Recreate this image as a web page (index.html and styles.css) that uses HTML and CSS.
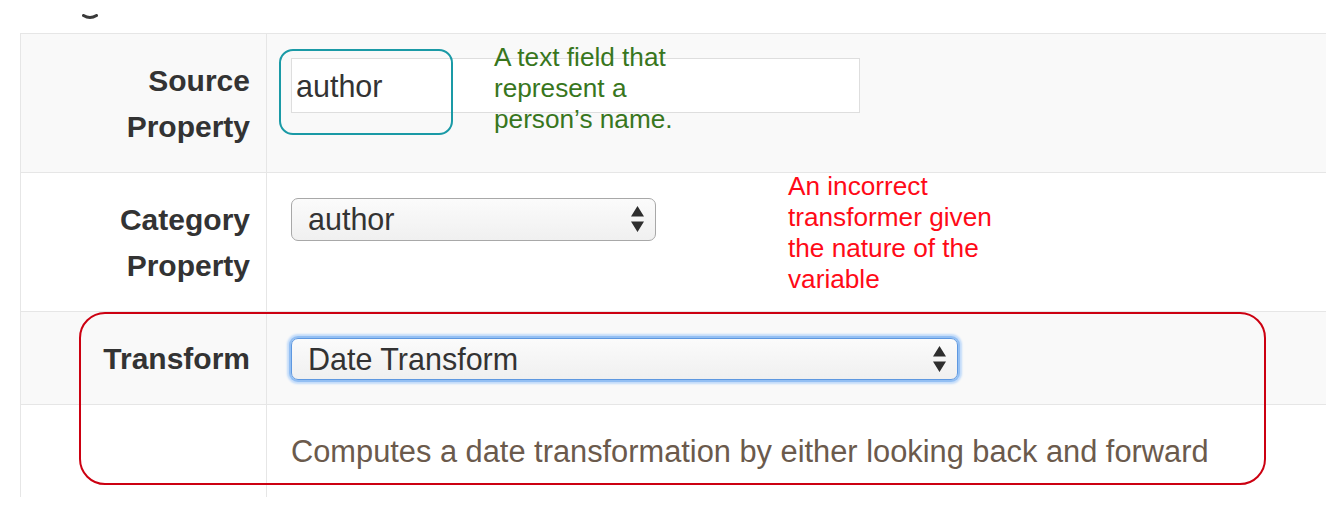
FILE: index.html
```html
<!DOCTYPE html>
<html>
<head>
<meta charset="utf-8">
<link rel="stylesheet" href="styles.css">
</head>
<body>
<div class="page">
  <div class="header">
    <svg class="mark" width="16" height="7" viewBox="0 0 16 7"><path d="M1.5 1.5 Q8 5.5 14.5 1.5" fill="none" stroke="#3a3a3a" stroke-width="3" stroke-linecap="round"/></svg>
  </div>
  <table class="props">
    <tr class="striped">
      <th class="label">Source<br>Property</th>
      <td class="value"><div class="text-input">author</div></td>
    </tr>
    <tr>
      <th class="label">Category<br>Property</th>
      <td class="value">
        <div class="select narrow"><span>author</span>
          <svg class="arrows" width="13" height="27" viewBox="0 0 13 27"><path d="M6.5 0 L13 10.5 L0 10.5 Z M0 15.5 L13 15.5 L6.5 26 Z" fill="#2e2e2e"/></svg>
        </div>
      </td>
    </tr>
    <tr class="striped">
      <th class="label">Transform</th>
      <td class="value">
        <div class="select wide focused"><span>Date Transform</span>
          <svg class="arrows" width="13" height="27" viewBox="0 0 13 27"><path d="M6.5 0 L13 10.5 L0 10.5 Z M0 15.5 L13 15.5 L6.5 26 Z" fill="#2e2e2e"/></svg>
        </div>
      </td>
    </tr>
    <tr class="last">
      <th class="label"></th>
      <td class="value desc">Computes a date transformation by either looking back and forward</td>
    </tr>
  </table>

  <div class="note note-green">A text field that<br>represent a<br>person’s name.</div>
  <div class="note note-red">An incorrect<br>transformer given<br>the nature of the<br>variable</div>
  <div class="ring ring-teal"></div>
  <div class="ring ring-red"></div>
</div>
</body>
</html>
```
FILE: styles.css
```css
html, body {
  margin: 0;
  padding: 0;
  background: #fff;
}
body {
  font-family: "Liberation Sans", Arial, Helvetica, sans-serif;
  color: #333;
}
.page {
  position: relative;
  width: 1344px;
  height: 522px;
  overflow: hidden;
}
.header {
  height: 33px;
  padding-left: 82px;
  padding-top: 14px;
  box-sizing: border-box;
}
.mark {
  display: block;
}
.props {
  margin-left: 20px;
  width: 1306px;
  border-collapse: collapse;
  border-spacing: 0;
}
.props tr {
  border-top: 1px solid #e6e6e6;
}
.props tr.striped {
  background: #f9f9f9;
}
.label {
  width: 229px;
  border-left: 1px solid #e6e6e6;
  border-right: 1px solid #e6e6e6;
  padding: 24px 16px 22px 0;
  text-align: right;
  vertical-align: top;
  font-size: 30px;
  line-height: 46px;
  font-weight: bold;
  color: #333;
}
.value {
  padding: 24px 0 0 24px;
  vertical-align: top;
}
.text-input {
  width: 569px;
  height: 55px;
  box-sizing: border-box;
  border: 1px solid #dedede;
  background: #fff;
  padding-left: 4px;
  font-size: 30.5px;
  line-height: 55px;
  color: #333;
}
.select {
  display: flex;
  align-items: center;
  justify-content: space-between;
  box-sizing: border-box;
  height: 43px;
  margin-top: 1px;
  padding: 0 11px 0 16px;
  border: 1px solid #a8a8a8;
  border-radius: 7px;
  background: linear-gradient(#fbfbfb, #f0f0f0);
  font-size: 30.5px;
  line-height: 41px;
  color: #333;
}
.select.narrow {
  width: 365px;
}
.select.wide {
  width: 667px;
  margin-top: 2px;
  height: 42px;
  border-color: #5e98e0;
  box-shadow: 0 0 0 2px #93bff3, 0 0 2px 4px #c3dcfa;
}
.arrows {
  display: block;
}
.desc {
  padding-bottom: 22px;
  font-size: 30.8px;
  line-height: 46px;
  color: #6b5a4c;
}
.note {
  position: absolute;
  font-size: 26.2px;
  line-height: 31px;
}
.note-green {
  left: 494px;
  top: 42px;
  color: #38761d;
}
.note-red {
  left: 788px;
  top: 171px;
  color: #ff0a17;
}
.ring {
  position: absolute;
  box-sizing: border-box;
}
.ring-teal {
  left: 279px;
  top: 49px;
  width: 174px;
  height: 86px;
  border: 2.5px solid #1a9aa6;
  border-radius: 14px;
}
.ring-red {
  left: 79px;
  top: 312px;
  width: 1187px;
  height: 173px;
  border: 2.5px solid #cc0011;
  border-radius: 26px;
}
```
